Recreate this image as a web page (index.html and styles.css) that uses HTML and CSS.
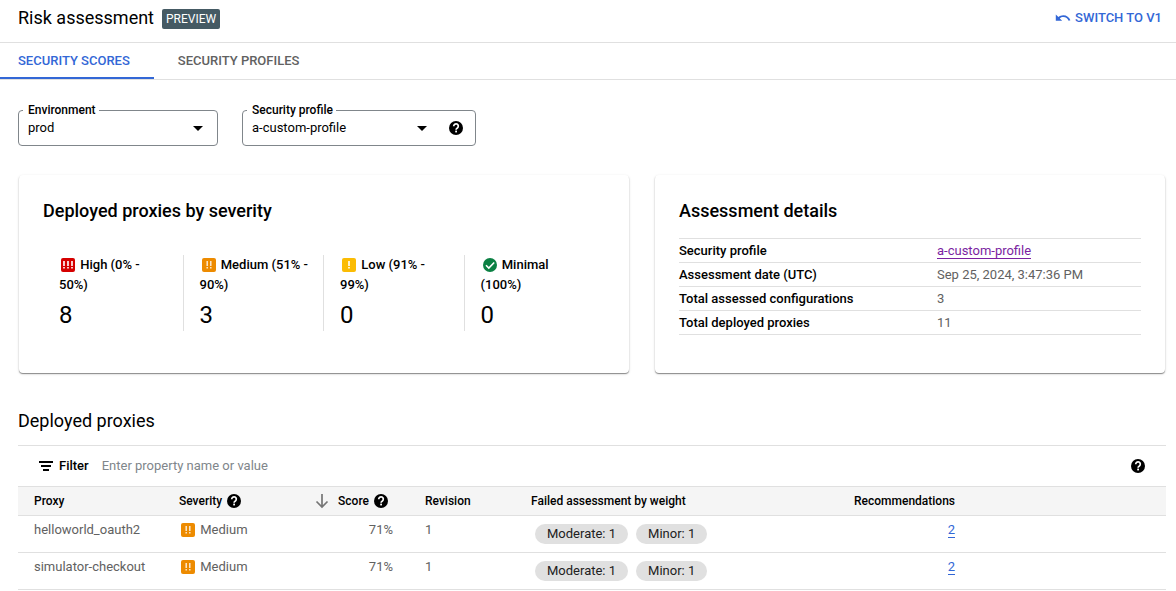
FILE: index.html
```html
<!DOCTYPE html>
<html lang="en">
<head>
<meta charset="utf-8">
<meta name="viewport" content="width=device-width, initial-scale=1">
<title>Risk assessment</title>
<link rel="stylesheet" href="styles.css">
</head>
<body>
<svg class="sprite" aria-hidden="true">
  <symbol id="help" viewBox="0 0 18 18">
    <circle cx="9" cy="9" r="7" fill="#000"/>
    <path d="M6.700 7.200a2.300 2.300 0 1 1 3.700 1.800c-.8.6-1.300.9-1.300 1.700" fill="none" stroke="#fff" stroke-width="1.700"/>
    <rect x="8.200" y="11.600" width="1.800" height="1.800" fill="#fff"/>
  </symbol>
  <symbol id="high" viewBox="0 0 18 18">
    <rect x="2" y="2" width="14" height="14" rx="2" fill="#d50000"/>
    <path d="M5 5v5M9 5v5M13 5v5M5 11v1.600M9 11v1.600M13 11v1.600" stroke="#fff" stroke-width="1.600"/>
  </symbol>
  <symbol id="medium" viewBox="0 0 18 18">
    <rect x="2" y="2" width="14" height="14" rx="2" fill="#ed8b00"/>
    <path d="M7.200 5v5M10.800 5v5M7.200 11v1.600M10.800 11v1.600" stroke="#fff" stroke-opacity=".85" stroke-width="1.400"/>
  </symbol>
  <symbol id="low" viewBox="0 0 18 18">
    <rect x="2" y="2" width="14" height="14" rx="2" fill="#fbbc04"/>
    <path d="M9 5v5M9 11v1.600" stroke="#fff" stroke-width="1.600"/>
  </symbol>
  <symbol id="minimal" viewBox="0 0 18 18">
    <circle cx="9" cy="9" r="7" fill="#0b8043"/>
    <path d="M5 9.200l2.800 2.800 5.400-5.500" fill="none" stroke="#fff" stroke-width="1.600"/>
  </symbol>
</svg>

<header class="header">
  <h1 class="title">Risk assessment</h1>
  <span class="badge">PREVIEW</span>
  <button class="switch" type="button">
    <svg class="undo" viewBox="0 0 16 16" aria-hidden="true"><path d="M8.300 5.200c-1.900 0-3.600.7-4.900 1.800L.8 4.600v6.200h6.400L4.800 8.400c.9-.8 2.100-1.300 3.500-1.300 2.500 0 4.500 1.500 5.300 3.700l1.800-.6C14.400 7.300 11.600 5.200 8.300 5.200z" fill="#3367d6"/></svg>
    SWITCH TO V1
  </button>
</header>

<nav class="tabs">
  <a class="tab tab-active" href="#scores">SECURITY SCORES</a>
  <a class="tab" href="#profiles">SECURITY PROFILES</a>
</nav>

<main class="content">
  <div class="fields">
    <div class="field">
      <label class="field-label" for="env">Environment</label>
      <select class="field-select" id="env"><option>prod</option></select>
      <svg class="caret" viewBox="0 0 10 5" aria-hidden="true"><path d="M0 0h10L5 5z"/></svg>
    </div>
    <div class="field field-wide">
      <label class="field-label" for="profile">Security profile</label>
      <select class="field-select" id="profile"><option>a-custom-profile</option></select>
      <svg class="caret" viewBox="0 0 10 5" aria-hidden="true"><path d="M0 0h10L5 5z"/></svg>
      <button class="icon-button" type="button" aria-label="Help"><svg class="icon"><use href="#help"/></svg></button>
    </div>
  </div>

  <div class="cards">
    <section class="card">
      <h2 class="card-title">Deployed proxies by severity</h2>
      <div class="stats">
        <div class="stat"><div class="stat-label"><svg class="icon"><use href="#high"/></svg> High (0% - 50%)</div><div class="stat-value">8</div></div>
        <div class="stat"><div class="stat-label"><svg class="icon"><use href="#medium"/></svg> Medium (51% - 90%)</div><div class="stat-value">3</div></div>
        <div class="stat"><div class="stat-label"><svg class="icon"><use href="#low"/></svg> Low (91% - 99%)</div><div class="stat-value">0</div></div>
        <div class="stat"><div class="stat-label"><svg class="icon"><use href="#minimal"/></svg> Minimal (100%)</div><div class="stat-value">0</div></div>
      </div>
    </section>
    <section class="card">
      <h2 class="card-title">Assessment details</h2>
      <table class="details">
        <tr><th scope="row">Security profile</th><td><a class="link visited" href="#profile">a-custom-profile</a></td></tr>
        <tr><th scope="row">Assessment date (UTC)</th><td>Sep 25, 2024, 3:47:36 PM</td></tr>
        <tr><th scope="row">Total assessed configurations</th><td>3</td></tr>
        <tr><th scope="row">Total deployed proxies</th><td>11</td></tr>
      </table>
    </section>
  </div>

  <h2 class="section-title">Deployed proxies</h2>
  <div class="filter">
    <svg class="icon" viewBox="0 0 18 18" aria-hidden="true"><path d="M2 4h14v2H2zM4 8h10v2H4zM6 12h6v2H6z"/></svg>
    <label class="filter-label" for="filter">Filter</label>
    <input class="filter-input" id="filter" type="text" placeholder="Enter property name or value">
    <button class="icon-button" type="button" aria-label="Help"><svg class="icon"><use href="#help"/></svg></button>
  </div>
  <table class="proxies">
    <colgroup><col class="c-proxy"><col class="c-severity"><col class="c-score"><col class="c-revision"><col class="c-failed"><col class="c-recs"><col class="c-rest"></colgroup>
    <thead>
      <tr>
        <th scope="col">Proxy</th>
        <th scope="col"><div class="head">Severity<svg class="icon"><use href="#help"/></svg></div></th>
        <th scope="col"><div class="head head-score"><svg class="icon sort" viewBox="0 0 18 18"><path d="M9 2v13M3.500 9.500L9 15l5.500-5.500" fill="none" stroke="#757575" stroke-width="1.700"/></svg>Score<svg class="icon"><use href="#help"/></svg></div></th>
        <th scope="col">Revision</th>
        <th scope="col">Failed assessment by weight</th>
        <th scope="col" class="num">Recommendations</th>
        <td></td>
      </tr>
    </thead>
    <tbody>
      <tr>
        <td>helloworld_oauth2</td>
        <td><svg class="icon"><use href="#medium"/></svg> Medium</td>
        <td class="num">71%</td>
        <td>1</td>
        <td><div class="chips"><span class="chip">Moderate: 1</span><span class="chip">Minor: 1</span></div></td>
        <td class="num"><a class="link" href="#r1">2</a></td>
        <td></td>
      </tr>
      <tr>
        <td>simulator-checkout</td>
        <td><svg class="icon"><use href="#medium"/></svg> Medium</td>
        <td class="num">71%</td>
        <td>1</td>
        <td><div class="chips"><span class="chip">Moderate: 1</span><span class="chip">Minor: 1</span></div></td>
        <td class="num"><a class="link" href="#r2">2</a></td>
        <td></td>
      </tr>
    </tbody>
  </table>
</main>
</body>
</html>
```

FILE: styles.css
```css
* { box-sizing: border-box; }
body {
  margin: 0;
  background: #fff;
  color: #000;
  font: 400 13px/20px Roboto, "Liberation Sans", sans-serif;
}
h1, h2 { margin: 0; font-size: 18px; line-height: 24px; font-weight: 400; }
button { border: 0; padding: 0; background: none; font: inherit; color: inherit; }
.sprite { display: none; }
.icon { width: 18px; height: 18px; flex: none; vertical-align: -5px; }

.header {
  display: flex;
  align-items: center;
  gap: 8px;
  height: 43px;
  padding: 0 14px 6px 18px;
  border-bottom: 1px solid #e0e0e0;
}
.badge {
  margin-top: 2px;
  padding: 0 4px;
  border-radius: 2px;
  background: #455a64;
  color: #fff;
  font-size: 12px;
}
.switch {
  display: flex;
  align-items: center;
  gap: 4px;
  margin-left: auto;
  color: #3367d6;
  font-weight: 500;
}
.undo { width: 16px; height: 16px; }

.tabs { display: flex; height: 37px; border-bottom: 1px solid #e0e0e0; }
.tab {
  padding: 8px 24px 6px;
  color: #616161;
  font-weight: 500;
  text-decoration: none;
}
.tab-active { padding-left: 18px; border-bottom: 2px solid #3367d6; color: #3367d6; }

.content { padding: 30px 10px 0 18px; }
.fields { display: flex; gap: 24px; }
.field {
  position: relative;
  display: flex;
  align-items: center;
  width: 200px;
  height: 36px;
  padding-right: 14px;
  border: 1px solid #80868b;
  border-radius: 4px;
}
.field-wide { width: 234px; padding-right: 10px; }
.field-label {
  position: absolute;
  top: -9px;
  left: 4px;
  padding: 0 3px 0 5px;
  background: #fff;
  font-size: 12px;
  line-height: 16px;
  font-weight: 500;
}
.field-select {
  flex: 1;
  min-width: 0;
  height: 34px;
  padding: 0 0 0 9px;
  border: 0;
  background: none;
  appearance: none;
  color: #000;
  font: inherit;
}
.caret { width: 10px; height: 5px; }
.icon-button { display: flex; }
.field-wide .icon-button { margin-left: 20px; }

.cards {
  display: grid;
  grid-template-columns: 61fr 51fr;
  gap: 26px;
  margin: 29px 1px 0;
}
.card {
  padding: 24px 24px 38px;
  border-radius: 4px;
  box-shadow: 0 1px 1px rgba(0, 0, 0, .4), 0 1px 3px rgba(0, 0, 0, .14);
}
.card-title { font-weight: 500; }
.stats { display: grid; grid-template-columns: repeat(4, 1fr); margin-top: 32px; }
.stat { padding: 0 14px 0 16px; border-right: 1px solid #e0e0e0; }
.stat:last-child { border-right: 0; }
.stat-label { font-weight: 500; }
.stat-value { padding: 6px 0 2px; font-size: 24px; line-height: 28px; }

.details {
  width: 100%;
  margin-top: 15px;
  border-collapse: collapse;
  border-top: 1px solid #e0e0e0;
}
.details tr { border-bottom: 1px solid #e0e0e0; }
.details th, .details td { height: 24px; padding: 2px 0 1px; text-align: left; }
.details th { width: 258px; font-weight: 500; }
.details td { color: #616161; }
.link { border-bottom: 1px solid; color: #3367d6; text-decoration: none; }
.link.visited { color: #7b1fa2; }

.section-title { margin: 36px 0 12px; }
.filter {
  display: flex;
  align-items: center;
  height: 41px;
  padding: 0 19px;
  border-top: 1px solid #e0e0e0;
}
.filter-label { margin: 0 13px 0 4px; font-weight: 500; }
.filter-input {
  flex: 1;
  min-width: 0;
  padding: 0;
  border: 0;
  outline: 0;
  background: none;
  font: inherit;
}
.filter-input::placeholder { color: #80868b; }

.proxies { width: 100%; table-layout: fixed; border-collapse: collapse; }
.c-proxy { width: 145px; }
.c-severity { width: 137px; }
.c-score { width: 109px; }
.c-revision { width: 106px; }
.c-failed { width: 323px; }
.c-recs { width: 133px; }
.c-rest { width: 195px; }
.proxies th, .proxies td { padding: 4px 16px; text-align: left; vertical-align: top; }
.proxies tr { border-bottom: 1px solid #e0e0e0; }
.proxies thead tr { background: #f5f5f5; border-top: 1px solid #e0e0e0; }
.proxies th { font-size: 12px; font-weight: 500; white-space: nowrap; }
.proxies tbody td { height: 37px; color: #616161; }
.proxies .num { text-align: right; }
.head { display: flex; align-items: center; gap: 3px; }
.head-score { justify-content: flex-end; margin: 0 3px 0 -8px; }
.sort { margin-right: 4px; }
.chips { display: flex; gap: 8px; padding: 4px 4px 0; }
.chip {
  padding: 0 12px;
  border-radius: 10px;
  background: #e0e0e0;
  color: #212121;
}
```
